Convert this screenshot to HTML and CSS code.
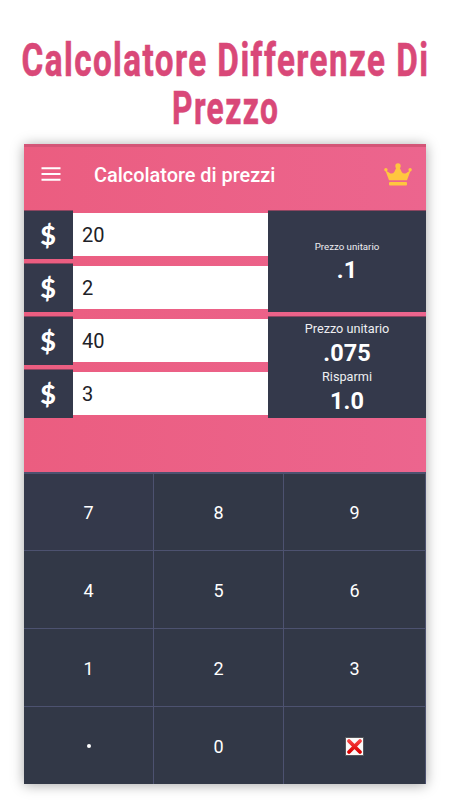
FILE: index.html
```html
<!doctype html>
<html lang="it">

<head>
    <meta charset="utf-8">
    <meta name="viewport" content="width=device-width, initial-scale=1">
    <title>Calcolatore Differenze Di Prezzo</title>
    <link rel="stylesheet" href="styles.css">
</head>

<body>
<h1 class="headline">
    <span class="wide">Calcolatore Differenze Di</span>
    <span>Prezzo</span>
</h1>

<main class="app">
    <header class="toolbar">
        <svg class="menu-icon" viewBox="0 0 20 14" aria-label="Menu">
            <path d="M.5 1.2h19M.5 7h19M.5 12.8h19" stroke="#fff" stroke-width="1.9"/>
        </svg>
        <h2>Calcolatore di prezzi</h2>
        <svg class="crown-icon" viewBox="0 0 28 23" aria-label="Premium">
            <g fill="#ffc63f">
                <circle cx="14" cy="3" r="2.7"/>
                <circle cx="1.9" cy="6.7" r="1.7"/>
                <circle cx="26.1" cy="6.7" r="1.7"/>
                <path d="M1.3 7.2 5 17.3h18l3.7-10.1-5.2 3.3q-2.6.4-3.8-1.6L15.4 4h-2.8l-2.3 4.9q-1.2 2-3.8 1.6z"/>
                <rect x="5" y="19" width="18" height="3.4" rx="1"/>
            </g>
        </svg>
    </header>

    <section class="prices">
        <div class="group">
            <div class="fields">
                <label><span class="currency">$</span><span class="value">20</span></label>
                <label><span class="currency">$</span><span class="value">2</span></label>
            </div>
            <div class="result">
                <span class="caption small">Prezzo unitario</span>
                <strong>.1</strong>
            </div>
        </div>
        <div class="group">
            <div class="fields">
                <label><span class="currency">$</span><span class="value">40</span></label>
                <label><span class="currency">$</span><span class="value">3</span></label>
            </div>
            <div class="result">
                <span class="caption">Prezzo unitario</span>
                <strong>.075</strong>
                <span class="caption">Risparmi</span>
                <strong>1.0</strong>
            </div>
        </div>
    </section>

    <section class="keypad">
        <button type="button" class="first">7</button>
        <button type="button">8</button>
        <button type="button">9</button>
        <button type="button">4</button>
        <button type="button">5</button>
        <button type="button">6</button>
        <button type="button">1</button>
        <button type="button">2</button>
        <button type="button">3</button>
        <button type="button"><span class="dot"></span></button>
        <button type="button">0</button>
        <button type="button" aria-label="Cancella">
            <svg class="clear-icon" viewBox="0 0 19 19">
                <defs>
                    <linearGradient id="red" x1="0" y1="0" x2="0" y2="19" gradientUnits="userSpaceOnUse">
                        <stop offset=".15" stop-color="#fa4545"/>
                        <stop offset=".8" stop-color="#d90000"/>
                    </linearGradient>
                </defs>
                <rect x=".5" y=".5" width="18" height="18" fill="#fafafa" stroke="#55575c"/>
                <path d="M4 4l11 11M15 4 4 15" stroke="url(#red)" stroke-width="3.8" stroke-linecap="round"/>
            </svg>
        </button>
    </section>
</main>
</body>
</html>
```
FILE: styles.css
```css
:root {
    --color-title: #d94878;
    --color-panel: #34394b;
    --color-key: #323847;
    --color-line: #4d5270;
}

*, *::before, *::after {
    box-sizing: border-box;
}

body {
    margin: 0;
    height: 800px;
    overflow: hidden;
    background: #fff;
    font-family: Roboto, sans-serif;
}

.headline {
    display: flex;
    flex-direction: column;
    align-items: center;
    height: 144px;
    margin: 0;
    padding: 36px 0 0 1px;
    color: var(--color-title);
    font-size: 46px;
    font-weight: 700;
    line-height: 48px;
    letter-spacing: 2px;
    white-space: nowrap;
    -webkit-text-stroke: 0.6px var(--color-title);
}

.headline span {
    transform: scaleX(0.69);
}

.headline .wide {
    transform: scaleX(0.722);
}

.app {
    display: flex;
    flex-direction: column;
    width: 402px;
    height: 640px;
    margin: 0 auto;
    background: linear-gradient(90deg, #eb5d80, #ec658e);
    box-shadow: 0 1px 12px rgb(0 0 0 / 0.35);
}

.toolbar {
    display: flex;
    align-items: center;
    height: 66px;
    padding: 0 14px 9px 17px;
    border-top: 3px solid #d35577;
}

.menu-icon {
    width: 20px;
    height: 14px;
}

.toolbar h2 {
    margin: 0 auto 0 33px;
    padding-top: 3px;
    color: #fff;
    font-size: 19.9px;
    font-weight: 500;
}

.crown-icon {
    width: 28px;
    height: 23px;
}

.prices {
    display: flex;
    flex-direction: column;
    gap: 4px;
    height: 262px;
}

.group {
    display: flex;
    height: 102px;
}

.fields {
    display: flex;
    flex-direction: column;
    gap: 4px;
    width: 244px;
}

.fields label {
    display: flex;
    align-items: center;
    height: 49px;
}

.currency {
    width: 49px;
    height: 49px;
    padding-right: 1px;
    border-top: 1px solid #8d4560;
    background: var(--color-panel);
    color: #fff;
    font-family: Lato, sans-serif;
    font-size: 27px;
    font-weight: 900;
    line-height: 48px;
    text-align: center;
}

.value {
    flex: 1;
    height: 43px;
    padding-left: 9px;
    background: #fff;
    color: #202127;
    font-size: 20px;
    line-height: 44px;
}

.result {
    display: flex;
    flex: 1;
    flex-direction: column;
    align-items: center;
    justify-content: center;
    padding-bottom: 1px;
    border-top: 1px solid #8d4560;
    background: var(--color-panel);
    color: #fff;
}

.caption {
    color: #eeeef1;
    font-size: 12.7px;
    line-height: 20px;
}

.caption.small {
    font-size: 9.7px;
    line-height: 18px;
}

.result strong {
    font-size: 23.5px;
    line-height: 28px;
}

.keypad {
    display: grid;
    flex: 1;
    grid-template-columns: 130px 130px 142px;
    grid-template-rows: repeat(4, 78px);
}

.keypad button {
    display: flex;
    align-items: center;
    justify-content: center;
    padding: 1px 0 0;
    border: 0;
    border-top: 1px solid var(--color-line);
    border-right: 1px solid var(--color-line);
    background: var(--color-key);
    color: #fff;
    font-family: inherit;
    font-size: 18px;
}

.keypad button:nth-child(-n+3) {
    padding-top: 0;
    border-top-width: 2px;
}

.keypad .first {
    background: var(--color-panel);
}

.dot {
    width: 4px;
    height: 4px;
    border-radius: 50%;
    background: #fff;
}

.clear-icon {
    width: 19px;
    height: 19px;
}
```
